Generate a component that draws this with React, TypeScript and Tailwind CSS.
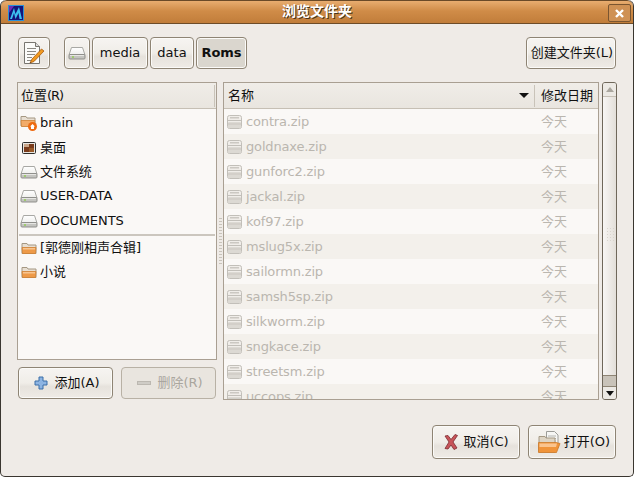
import React from "react";

const font = { fontFamily: '"DejaVu Sans","Noto Sans CJK SC",sans-serif' };

function Hdd({ s = 18 }: { s?: number }) {
  return (
    <svg width={s} height={s} viewBox="0 0 18 18" className="shrink-0">
      <defs>
        <linearGradient id="hddTop" x1="0" y1="0" x2="0" y2="1">
          <stop offset="0" stopColor="#ffffff" />
          <stop offset="1" stopColor="#eeeeec" />
        </linearGradient>
      </defs>
      <path d="M3.500 3.500h11l2.500 7.500H1z" fill="url(#hddTop)" stroke="#a8a8a4" />
      <rect x="1" y="10.500" width="16" height="4.500" rx="1" fill="#c4c4c0" stroke="#8f8f8b" />
      <rect x="2" y="11" width="14" height="1" fill="#e6e6e3" />
      <rect x="4" y="12.500" width="2" height="1" fill="#7bd020" />
    </svg>
  );
}
function Folder({ s = 16 }: { s?: number }) {
  return (
    <svg width={s} height={s} viewBox="0 0 16 16" className="shrink-0">
      <path d="M1 3.500h5l1 1.500h8v8.500H1z" fill="#e8dfd2" stroke="#a59883" />
      <path d="M1 7.500h14l-.5 6H1.500z" fill="#ee9a48" stroke="#cf8234" strokeWidth=".8" />
      <rect x="2" y="8" width="12" height="1.500" fill="#f8c590" />
    </svg>
  );
}
function Zip() {
  return (
    <svg width="16" height="16" viewBox="0 0 16 16" className="shrink-0">
      <rect x="1.500" y="1.500" width="14" height="13" rx="2" fill="#f0ede9" stroke="#c2bfb9" />
      <rect x="4" y="3" width="9" height="1.500" fill="#cbc8c2" />
      <path d="M1.500 6.500h14" stroke="#c2bfb9" />
      <rect x="2" y="8" width="13" height="6" rx="1" fill="#dcd9d3" />
      <rect x="2" y="9.500" width="13" height="1" fill="#c9c6c0" />
    </svg>
  );
}
function Desktop() {
  return (
    <svg width="16" height="16" viewBox="0 0 16 16" className="shrink-0">
      <rect x="1.500" y="2.500" width="13" height="11" rx="1" fill="#e8e6e2" stroke="#2e2e2c" />
      <rect x="3" y="4" width="10" height="8" fill="#7a3c1c" />
      <rect x="3" y="4" width="5" height="3" fill="#caa78a" />
      <rect x="8" y="8" width="5" height="4" fill="#9a5a28" />
    </svg>
  );
}
function HomeFolder() {
  return (
    <svg width="18" height="18" viewBox="0 0 18 18" className="shrink-0">
      <path d="M1 2.500h5l1 1.500h8v8H1z" fill="#e8dfd2" stroke="#a59883" />
      <path d="M1 6.500h14l-.5 6H1.500z" fill="#f2ab68" stroke="#cf8234" strokeWidth=".8" />
      <circle cx="12.500" cy="12.500" r="4.500" fill="#ee6a10" />
      <path d="M12.500 10l2.500 2.500h-1V15h-3v-2.500h-1z" fill="#fff" />
    </svg>
  );
}
function Edit() {
  return (
    <svg width="22" height="24" viewBox="0 0 22 24">
      <path d="M1.500 1.500h11l4 4v17h-15z" fill="#fbfbf9" stroke="#77756f" />
      <path d="M12.500 1.500v4h4" fill="#ddd" stroke="#77756f" />
      <path d="M4 7.500h9M4 10.500h9M4 13.500h8M4 16.500h5M4 19.500h8" stroke="#8a8882" />
      <path d="M9 18l-2 4 4-1.500 10-10.500-2.500-2z" fill="#f09a20" stroke="#a85a10" strokeWidth=".8" />
      <path d="M7.500 21l-.5 1 1-.5z" fill="#222" />
    </svg>
  );
}
function OpenIcon() {
  return (
    <svg width="24" height="24" viewBox="0 0 24 24" className="shrink-0">
      <path d="M9.500 1.500h8l3.500 3.500v13H9.500z" fill="#f6f6f4" stroke="#9c9c98" />
      <path d="M11 6h8M11 8.500h8M11 11h8" stroke="#b4b4b0" />
      <path d="M2 6.500h6l1 1.500h9v14H2z" fill="#ddd4c4" stroke="#a59883" />
      <path d="M1.500 12.500H19l4 1-3.500 9h-18z" fill="#f0943a" stroke="#cb7a2a" strokeWidth=".8" />
      <path d="M2.500 13.500H20l-1 3.500H2.500z" fill="#fac48e" />
    </svg>
  );
}
function AppLogo() {
  return (
    <svg width="16" height="16" viewBox="0 0 16 16">
      <rect x=".5" y=".5" width="15" height="15" fill="#14147a" stroke="#2a90d8" />
      <path d="M2 14L6 3l1.500 6L11 2l3 12h-2.500L10.500 8 7.500 14 6 8l-2 6z" fill="#3cc0f0" />
      <path d="M1 1h5L1 8z" fill="#6a2ab8" />
    </svg>
  );
}
function Btn({ className = "", children }: { className?: string; children: React.ReactNode }) {
  return (
    <div className={`flex items-center justify-center rounded-[4px] border border-[#8e8474] bg-[linear-gradient(#f6f4f1_0%,#f0ede8_50%,#e6e2dc_62%,#efebe6_100%)] shadow-[inset_0_0_0_1px_#fbfaf8] text-[13px] text-[#101010] ${className}`}>
      {children}
    </div>
  );
}
const places = [
  { i: <HomeFolder />, t: "brain", h: "h-[25px]" },
  { i: <Desktop />, t: "桌面", h: "h-[25px]" },
  { i: <Hdd />, t: "文件系统", h: "h-[23px]" },
  { i: <Hdd />, t: "USER-DATA", h: "h-[26px]" },
  { i: <Hdd />, t: "DOCUMENTS", h: "h-[24px]" },
];
const files = ["contra.zip", "goldnaxe.zip", "gunforc2.zip", "jackal.zip", "kof97.zip", "mslug5x.zip", "sailormn.zip", "samsh5sp.zip", "silkworm.zip", "sngkace.zip", "streetsm.zip", "uccops.zip"];

function Header({ children, className = "" }: { children: React.ReactNode; className?: string }) {
  return (
    <div className={`flex h-[26px] shrink-0 items-center border-b border-[#c6bfb4] bg-[linear-gradient(#f0ede8,#e9e5df)] pt-[1px] text-[13px] text-[#101010] ${className}`}>
      {children}
    </div>
  );
}

export default function App() {
  return (
    <div style={font} className="flex h-[477px] w-[634px] flex-col overflow-hidden rounded-t-[6px] rounded-b-[5px] border border-t-0 border-[#3a3630] bg-[#efebe7]">
      <div className="relative flex h-[24px] shrink-0 items-center justify-center rounded-t-[6px] border-t border-b border-t-[#6a4a28] border-b-[#6d4c28] bg-[linear-gradient(#e8ad70,#d08c48_45%,#c17d3a)]">
        <div className="absolute left-[7px] top-[4px]"><AppLogo /></div>
        <span className="-mt-[1px] text-[14px] font-bold text-white [text-shadow:1px_1px_0_#4a3318]">浏览文件夹</span>
        <div className="absolute right-[2px] top-[3px] flex h-[18px] w-[23px] items-center justify-center rounded-[2px] border border-[#7a5530] bg-[#cf9154]">
          <svg width="11" height="11" viewBox="0 0 11 11"><path d="M2 2l7 7M9 2L2 9" stroke="#fff" strokeWidth="2.400" /></svg>
        </div>
      </div>

      <div className="flex flex-1 flex-col px-[16px] pt-[13px]">
        <div className="flex h-[32px] items-stretch">
          <Btn className="ml-px w-[32px]"><Edit /></Btn>
          <div className="ml-[14px] flex gap-[2px]">
            <Btn className="w-[26px]"><Hdd /></Btn>
            <Btn className="w-[56px]">media</Btn>
            <Btn className="w-[44px]">data</Btn>
            <Btn className="w-[51px] !bg-[#dad6ce] !bg-none font-bold">Roms</Btn>
          </div>
          <Btn className="ml-auto mr-[1px] w-[90px] pl-[2px]">创建文件夹(L)</Btn>
        </div>

        <div className="mt-[13px] flex h-[318px] items-stretch">
          <div className="flex w-[200px] shrink-0 flex-col">
            <div className="flex h-[278px] flex-col border border-[#a99f92] bg-[#faf8f6]">
              <Header className="pl-[3px]"><span className="flex-1">位置<span className="tracking-[-1px]">(R)</span></span><span className="mr-[1px] h-[22px] w-px bg-[#c9c3b9]" /></Header>
              <div className="pt-[1px]">
                {places.map((p) => (
                  <div key={p.t} className={`flex items-center gap-[3px] pl-[2px] text-[13px] text-[#101010] ${p.h}`}>
                    <span className="flex w-[17px] justify-center">{p.i}</span>
                    <span className="tracking-[-0.05px]">{p.t}</span>
                  </div>
                ))}
                <div className="mx-[1px] mt-[1px] h-[2px] bg-[#cbc6be]" />
                <div className="flex h-[23px] items-center gap-[3px] pl-[2px] text-[13px] text-[#101010]">
                  <span className="flex w-[17px] justify-center"><Folder /></span><span>[郭德刚相声合辑]</span>
                </div>
                <div className="flex h-[25px] items-center gap-[3px] pl-[2px] text-[13px] text-[#101010]">
                  <span className="flex w-[17px] justify-center"><Folder /></span><span>小说</span>
                </div>
              </div>
            </div>
            <div className="mt-[7px] flex gap-[8px] pl-[1px]">
              <Btn className="h-[32px] w-[95px] gap-[6px] pl-[3px]">
                <svg width="14" height="14" viewBox="0 0 14 14"><path d="M5 1h4v4h4v4H9v4H5V9H1V5h4z" fill="#8db4e2" stroke="#3a6ea8" /></svg>
                <span>添加(A)</span>
              </Btn>
              <Btn className="h-[32px] w-[95px] gap-[6px] !border-[#b8b1a5] !bg-[#e9e5df] !bg-none pl-[3px] !text-[#aaa69e] !shadow-none">
                <svg width="14" height="14" viewBox="0 0 14 14"><rect x="0.500" y="5.500" width="13" height="3" fill="#cfccc6" stroke="#bcb8b1" /></svg>
                <span>删除(R)</span>
              </Btn>
            </div>
          </div>

          <div className="relative w-[6px] shrink-0">
            <div className="absolute left-[2px] top-[135px] h-[47px] w-[3px] bg-[radial-gradient(#c8c3ba_0.6px,transparent_0.7px)] bg-[length:2px_3px]" />
          </div>

          <div className="flex w-[376px] shrink-0 flex-col overflow-hidden border border-[#a99f92] bg-[#faf8f6]">
            <Header>
              <span className="flex-1 pl-[4px]">名称</span>
              <svg width="10" height="6" viewBox="0 0 10 6" className="mr-[5px]"><path d="M0 0h10L5 5z" fill="#111" /></svg>
              <span className="h-[22px] w-px bg-[#c9c3b9]" />
              <span className="w-[63px] pl-[6px]">修改日期</span>
            </Header>
            <div className="h-[292px] overflow-hidden">
              {files.map((f, i) => (
                <div key={f} className={`flex h-[25px] items-center pl-[2px] text-[13px] text-[#bab6af] ${i % 2 ? "bg-[#f3f0eb]" : "bg-[#faf8f6]"}`}>
                  <Zip />
                  <span className="ml-[4px] flex-1 tracking-[-0.15px]">{f}</span>
                  <span className="w-[63px] pl-[6px]">今天</span>
                </div>
              ))}
            </div>
          </div>

          <div className="ml-[3px] flex w-[15px] shrink-0 flex-col overflow-hidden rounded-[3px] border border-[#6f675a] bg-[#d6d1c8]">
            <div className="flex h-[14px] items-center justify-center border-b border-[#c6c0b6] bg-[#ece9e4]">
              <svg width="8" height="5" viewBox="0 0 8 5"><path d="M0 5h8L4 0z" fill="#aaa69e" /></svg>
            </div>
            <div className="relative flex-1 border-b border-[#8e8474] bg-[linear-gradient(90deg,#f8f6f4,#e3dfd9)]">
              <div className="absolute left-[3px] top-[130px] h-[16px] w-[8px] bg-[radial-gradient(circle,#d9d5ce_0.5px,transparent_0.8px)] bg-[length:3px_3px]" />
            </div>
            <div className="h-[10px] shrink-0 bg-[#c9c3b9]" />
            <div className="flex h-[13px] items-center justify-center border-t border-[#8e8474] bg-[#ece9e4]">
              <svg width="8" height="5" viewBox="0 0 8 5"><path d="M0 0h8L4 5z" fill="#111" /></svg>
            </div>
          </div>
        </div>

        <div className="mt-[25px] flex justify-end gap-[8px] pr-[1px]">
          <Btn className="h-[34px] w-[88px] gap-[4px]">
            <svg width="16" height="16" viewBox="0 0 16 16"><path d="M2 2l3-.5 3 4 4-5 2.500 1L10 8l4 6-3 1.500L8 11l-3 4-3-.5L6 8z" fill="#c8555a" stroke="#7a2a30" strokeWidth=".8" /></svg>
            <span>取消(C)</span>
          </Btn>
          <Btn className="h-[34px] w-[88px] gap-[3px] pl-[3px]"><OpenIcon /><span>打开(O)</span></Btn>
        </div>
      </div>
    </div>
  );
}
